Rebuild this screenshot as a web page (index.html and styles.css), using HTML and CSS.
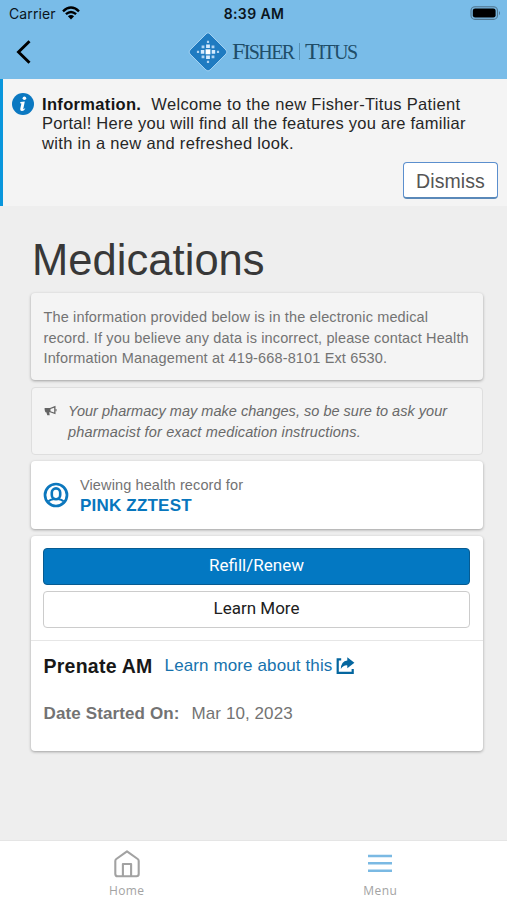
FILE: index.html
```html
<!DOCTYPE html>
<html lang="en">
<head>
<meta charset="utf-8">
<title>Medications</title>
<link rel="stylesheet" href="styles.css">
</head>
<body>
<header class="top">
  <div class="status">
    <div class="carrier"><span>Carrier</span>
      <svg width="18" height="14" viewBox="0 0 18 14" fill="none" stroke="#000" stroke-width="2.4"><path d="M1 5.3Q9-2.2 17 5.3"/><path d="M3.9 8.2Q9 3.7 14.1 8.2"/><path d="M5.9 10.2Q9 7.7 12.1 10.2L9 13.5Z" fill="#000" stroke="none"/></svg>
    </div>
    <div class="clock">8:39 AM</div>
    <svg class="battery" width="31" height="14" viewBox="0 0 31 14"><rect x="1" y=".8" width="26.5" height="12.6" rx="4" fill="#78b6df" stroke="#4f7690" stroke-width="1.1"/><rect x="2.8" y="2.5" width="22.8" height="9.1" rx="2.3"/><path d="M29 5q2 2.1 0 4.2z" fill="#4f7690"/></svg>
  </div>
  <div class="nav">
    <svg class="back" width="16" height="26" viewBox="0 0 16 26" fill="none" stroke="#000" stroke-width="2.9"><path d="M14.5 2.2 3.5 13 14.5 23.8"/></svg>
    <div class="brand">
      <svg width="40" height="40" viewBox="0 0 40 40"><path d="M20 .8Q21 .8 22 2L38 18Q40 20 38 22L22 38Q20 40 18 38L2 22Q0 20 2 18L18 2Q19 .8 20 .8Z" fill="#1f7bc1" stroke="#a4d2f2" stroke-width="1"/>
        <g fill="#d5ebff"><path d="M17.6 17.3h4.8v5h-4.8z" fill="#fff"/><path d="M18.1 12.6h3.8v3.5h-3.8zM18.1 23.6h3.8v3.5h-3.8zM12.8 18h3.5v3.7h-3.5zM23.7 18h3.5v3.7h-3.5z"/><path d="M13.6 13.5h2.8v2.8h-2.8zM23.6 13.5h2.8v2.8h-2.8zM13.6 23.5h2.8v2.8h-2.8zM23.6 23.5h2.8v2.8h-2.8zM18.9 8.8h2.2V11h-2.2zM18.9 28.8h2.2V31h-2.2zM8.9 18.8h2.2V21H8.9zM28.9 18.8h2.2V21h-2.2z" opacity=".8"/></g></svg>
      <span class="wordmark"><span class="w1">F<small>ISHER</small></span><i></i><span class="w2">T<small>ITUS</small></span></span>
    </div>
  </div>
</header>
<section class="alert">
  <svg class="info" width="22" height="22" viewBox="0 0 22 22"><circle cx="11" cy="11" r="11" fill="#0b78c1"/><circle cx="12.4" cy="5.2" r="1.8" fill="#fff"/><path d="M8.4 9.1 12.8 8.5 11.2 16.2Q12.3 16.2 13.3 15.1Q12.4 18.3 9.6 18.1Q7.7 17.9 8.3 15.6L9.4 10.5 8.1 10.3Z" fill="#fff"/></svg>
  <div class="message">
    <div class="a1"><b>Information.</b><span>Welcome to the new Fisher-Titus Patient</span></div>
    <div class="a2">Portal! Here you will find all the features you are familiar</div>
    <div class="a3">with in a new and refreshed look.</div>
  </div>
  <button class="dismiss">Dismiss</button>
</section>
<main>
  <h1>Medications</h1>
  <section class="card note">
    <div class="n1">The information provided below is in the electronic medical</div>
    <div class="n2">record. If you believe any data is incorrect, please contact Health</div>
    <div class="n3">Information Management at 419-668-8101 Ext 6530.</div>
  </section>
  <section class="card tip">
    <svg width="13" height="12" viewBox="0 0 13 12"><path d="M.6 3H6L11.5.8V9.3L6 7.3H5.2L5.7 10.2H3.3L2.3 7.3H1.4Q.3 5 .6 3Z" fill="#646464"/><path d="M6.5 4.1 10.2 2.7V7.5L6.5 6.2Z" fill="#f4f4f4"/><path d="M12 4v2.3" stroke="#646464"/></svg>
    <div><div class="t1">Your pharmacy may make changes, so be sure to ask your</div><div class="t2">pharmacist for exact medication instructions.</div></div>
  </section>
  <section class="card person">
    <svg width="26" height="26" viewBox="0 0 26 26" fill="none" stroke="#0c77bd"><circle cx="13" cy="13" r="11" stroke-width="2.7"/><rect x="8.8" y="6.4" width="8.4" height="10.8" rx="4.2" stroke-width="2.6"/><path d="M5.5 19.2Q7.2 17.6 10.8 17V15.8M20.5 19.2Q18.8 17.6 15.2 17V15.8" stroke-width="2.2"/></svg>
    <div><div class="viewing">Viewing health record for</div><strong>PINK ZZTEST</strong></div>
  </section>
  <section class="card med">
    <div class="actions"><button class="primary"><span>Refill/Renew</span></button><button><span>Learn More</span></button></div>
    <div class="details">
      <div class="drug"><b>Prenate AM</b><a>Learn more about this</a>
        <svg width="19" height="18" viewBox="0 0 19 18"><path d="M5.2 2.3H1.7V15.9H16.7V12" fill="none" stroke="#04669f" stroke-width="2.2"/><path d="M11.3.2 18.4 5.7 11.3 11.2V8.4Q7.5 8 4.8 12Q5 4.2 11.3 3.4Z" fill="#04669f"/></svg></div>
      <div class="date"><b>Date Started On:</b><span>Mar 10, 2023</span></div>
    </div>
  </section>
</main>
<footer>
  <div class="tab"><svg width="28" height="30" viewBox="0 0 28 30" fill="none" stroke="#a2a2a2" stroke-width="2.1" stroke-linejoin="round"><path d="M14 2.3 24.7 10Q25.7 10.8 25.7 12V25Q25.7 27.2 23.5 27.2H4.5Q2.3 27.2 2.3 25V12Q2.3 10.8 3.3 10Z"/><path d="M9.9 27.2V15H18.1V27.2"/></svg><span>Home</span></div>
  <div class="tab"><svg width="28" height="30" viewBox="0 0 28 30" stroke="#7ab9e3" stroke-width="2.4"><path d="M2 7H26M2 14.3H26M2 21.7H26"/></svg><span>Menu</span></div>
</footer>
</body>
</html>
```
FILE: styles.css
```css
* { box-sizing: border-box; }
body { margin: 0; width: 507px; height: 900px; overflow: hidden; display: flex; flex-direction: column; background: #eee; font-family: "Liberation Sans", Arial, sans-serif; color: #262626; white-space: nowrap; }
svg { flex: none; display: block; }
button { margin: 0; padding: 0; }
.top { height: 79px; flex: none; background: #79bce8; }
.status { height: 28px; display: grid; grid-template-columns: 1fr auto 1fr; padding: 0 6px 0 9px; align-items: center; font-family: Inter, sans-serif; color: #0b151d; }
.carrier { display: flex; gap: 6px; align-items: center; font-size: 14px; letter-spacing: .12px; }
.carrier span { margin-top: -2px; }
.carrier svg { margin-top: -2px; }
.clock { font-size: 14px; font-weight: 600; letter-spacing: .4px; margin: -1px 2px 0 0; }
.battery { justify-self: end; margin-top: -2px; }
.nav { height: 50px; display: flex; align-items: center; padding-left: 15px; }
.back { margin-top: -2px; }
.brand { display: flex; align-items: center; margin: -2px 0 0 157px; gap: 4px; }
.wordmark { display: flex; align-items: center; font: 24px/28px "Liberation Serif", serif; color: #204d68; margin-top: -1px; }
.wordmark small { font-size: 20px; }
.w1 { width: 62px; letter-spacing: -1.6px; }
.w2 { letter-spacing: -1.5px; }
.wordmark i { width: 1px; height: 17px; background: #5791b6; margin: 0 5px 0 5px; }
.alert { height: 127px; flex: none; background: #f4f4f4; border-left: 3px solid #0996dc; padding: 15px 9px 0; display: grid; grid-template-columns: 30px 1fr; grid-template-rows: 68px 37px; }
.info { margin-top: -1px; }
.message { font-size: 16.5px; line-height: 19.5px; letter-spacing: .26px; padding-top: .5px; }
.a1 { display: flex; gap: 10px; letter-spacing: .33px; }
.a3 { letter-spacing: .32px; }
.a1 b { color: #151515; }
.dismiss { grid-column: 2; justify-self: end; width: 95px; height: 37px; background: #fff; border: 1px solid #5b8fce; border-bottom: 2px solid #5a89b9; border-radius: 4px; font: 19.5px "Liberation Sans", sans-serif; color: #555; letter-spacing: .1px; padding-top: 2px; }
main { flex: 1; padding: 30px 24px 0 31px; }
h1 { margin: 0 0 9px 1px; font-size: 43.5px; line-height: 48px; font-weight: 400; color: #383838; letter-spacing: .05px; }
.card { background: #fff; border-radius: 4px; margin-bottom: 6px; width: 452px; box-shadow: 0 1px 3px #0005; }
.note, .tip { background: #f4f4f4; font-size: 14.5px; line-height: 20.7px; color: #737373; }
.note { height: 87px; margin-bottom: 7px; padding: 14px 12.5px; letter-spacing: .14px; }
.tip { height: 68px; padding: 13px 12px; display: flex; gap: 11px; font-style: italic; color: #696969; border: 1px solid #dedede; box-shadow: none; }
.t1 { letter-spacing: .02px; }
.t2 { letter-spacing: .15px; }
.tip svg { margin-top: 4px; }
.person { height: 68px; margin-bottom: 7px; padding: 14px 12px 0; display: flex; gap: 11px; font-size: 14.5px; line-height: 20px; color: #737373; letter-spacing: .12px; }
.person svg { margin-top: 7px; }
.person strong { display: block; font-size: 17px; line-height: 22px; color: #0876bd; letter-spacing: .2px; }
.med { height: 215px; padding-top: 12px; }
.actions { padding: 0 13px 0 12px; display: grid; gap: 6px; }
.actions button { height: 37px; background: #fff; border: 1px solid #ccc; border-radius: 4px; font: 17px Roboto, sans-serif; color: #202020; padding-bottom: 3px; }
.actions .primary { color: #fff; background: #0378c2; border-color: #075b91; }
.details { margin-top: 12px; border-top: 1px solid #e6e6e6; padding: 13px 12.5px; }
.drug { display: flex; align-items: center; height: 24px; color: #181818; }
.drug b { font-size: 19.5px; letter-spacing: .25px; }
.drug a { color: #1672ad; font-size: 17px; margin: 0 4px 0 12px; letter-spacing: .12px; }
.date { display: flex; align-items: baseline; gap: 12px; margin-top: 26px; font-size: 17px; color: #737373; }
.date b { letter-spacing: .12px; }
.date span { letter-spacing: .08px; }
footer { height: 60px; flex: none; background: #fff; display: grid; grid-template-columns: 1fr 1fr; border-top: 1px solid #e5e5e5; }
.tab { display: flex; flex-direction: column; align-items: center; padding-top: 8px; font: 12px/16px "Open Sans", sans-serif; color: #a3a3a3; letter-spacing: .4px; }
.tab span { margin-top: 4px; }
```
